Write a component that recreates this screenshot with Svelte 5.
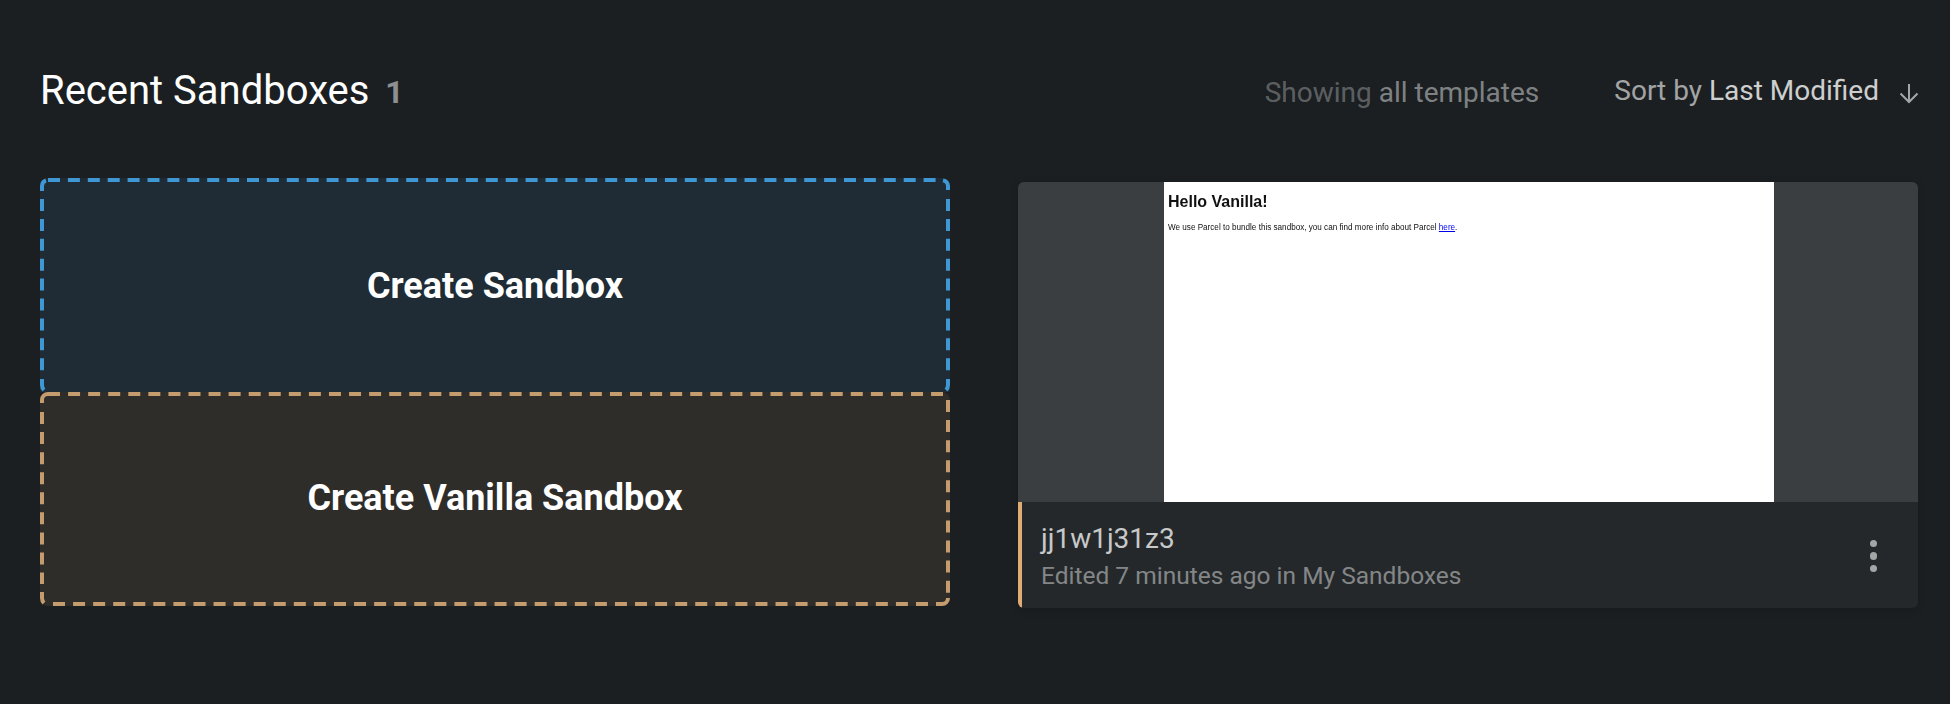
<script lang="ts">
  // dash phases differ per box, so each side of the border is its own path
  const creators = [
    {
      label: 'Create Sandbox',
      tone: 'blue',
      gap: 7.9,
      dashed: ['M8 2H896', 'M908 21V193', 'M2 21V193'],
      solid: [
        'M2 13V8A6 6 0 0 1 6 2.4',
        'M903 2.4A6 6 0 0 1 908 8V12',
        'M908 201V207Q908 210 906 212',
        'M2 201V207Q2 210 4 212'
      ]
    },
    {
      label: 'Create Vanilla Sandbox',
      tone: 'tan',
      gap: 8.07,
      dashed: ['M8 2H903', 'M908 8V201', 'M2 20V192', 'M13 212H888'],
      solid: [
        'M2 11V8A6 6 0 0 1 8 2',
        'M896 212H902A6 6 0 0 0 908 206',
        'M2 200V206Q2 209 4 211'
      ]
    }
  ]
</script>

<main class="page">
  <header class="head">
    <h1 class="title">Recent Sandboxes <span class="count">1</span></h1>
    <div class="filters">
      <span class="showing">Showing <b>all templates</b></span>
      <button class="sort" type="button">
        <span>Sort by <b>Last Modified</b></span>
        <svg width="22" height="22" viewBox="0 0 22 22" fill="none" stroke="currentColor" stroke-width="2">
          <path d="M11 2v18M2.5 11.5l8.5 8.5 8.5-8.5" />
        </svg>
      </button>
    </div>
  </header>

  <section class="grid">
    <div class="creators">
      {#each creators as creator (creator.label)}
        <button class={`create ${creator.tone}`} type="button">
          <svg class="edge" width="910" height="214" viewBox="0 0 910 214" fill="none" stroke-width="4">
            {#each creator.dashed as d}
              <path {d} stroke-dasharray={`12 ${creator.gap}`} />
            {/each}
            {#each creator.solid as d}
              <path {d} />
            {/each}
          </svg>
          <span class="label">{creator.label}</span>
        </button>
      {/each}
    </div>

    <article class="card">
      <div class="thumb">
        <div class="preview">
          <h2>Hello Vanilla!</h2>
          <p>We use Parcel to bundle this sandbox, you can find more info about Parcel <a href="#here">here</a>.</p>
        </div>
      </div>
      <footer class="info">
        <div>
          <div class="name">jj1w1j31z3</div>
          <div class="meta">Edited 7 minutes ago in My Sandboxes</div>
        </div>
        <button class="more" type="button" aria-label="More">
          <i></i><i></i><i></i>
        </button>
      </footer>
    </article>
  </section>
</main>

<style>
  :global(body) {
    background: #1b1f22;
    font-family: Roboto, sans-serif;
  }

  .page {
    height: 704px;
    box-sizing: border-box;
    padding: 0 30px 0 40px;
    overflow: hidden;
  }

  .head {
    display: flex;
    align-items: center;
    justify-content: space-between;
    height: 178px;
    padding-top: 5px;
    box-sizing: border-box;
  }

  .title {
    margin: 0;
    font-size: 40px;
    font-weight: 400;
    color: #fff;
    line-height: 46px;
  }

  .count {
    position: relative;
    top: -1px;
    margin-left: 6px;
    font-size: 32px;
    font-weight: 700;
    color: rgba(255, 255, 255, 0.5);
  }

  .filters {
    display: flex;
    align-items: center;
    gap: 75px;
    font-size: 28px;
    font-weight: 400;
    margin-top: -3px;
  }

  .showing {
    margin-top: 5px;
    color: rgba(255, 255, 255, 0.3);
  }

  .showing b {
    font-weight: 400;
    color: rgba(255, 255, 255, 0.45);
  }

  .sort {
    display: flex;
    align-items: center;
    gap: 19px;
    padding: 0;
    border: 0;
    background: none;
    font: inherit;
    color: rgba(255, 255, 255, 0.6);
  }

  .sort b {
    font-weight: 400;
    color: rgba(255, 255, 255, 0.8);
  }

  .sort svg {
    margin-top: 6px;
    color: rgba(255, 255, 255, 0.6);
  }

  .grid {
    display: flex;
    gap: 68px;
    align-items: flex-start;
  }

  .creators {
    display: flex;
    flex-direction: column;
    width: 910px;
  }

  .create {
    position: relative;
    height: 214px;
    box-sizing: border-box;
    padding: 0;
    border: 0;
    font-family: Roboto, sans-serif;
    font-size: 36px;
    font-weight: 700;
    color: #fff;
  }

  .blue .label {
    position: relative;
    top: 1px;
  }

  .tan .label {
    position: relative;
    top: -1px;
  }

  .edge {
    position: absolute;
    top: 0;
    left: 0;
  }

  .blue {
    background: #1f2c35;
    border-radius: 8px 8px 0 0;
  }

  .blue .edge {
    stroke: #3f97d3;
  }

  .tan {
    background: #2f2d2a;
    border-radius: 8px;
  }

  .tan .edge {
    stroke: #c49c6e;
  }

  .card {
    width: 900px;
    height: 426px;
    margin-top: 4px;
    border-radius: 6px;
    overflow: hidden;
    background: #24282a;
    box-shadow: 0 2px 8px rgba(0, 0, 0, 0.15);
  }

  .thumb {
    height: 320px;
    padding-left: 146px;
    background: #3a3e41;
  }

  .preview {
    width: 610px;
    height: 320px;
    box-sizing: border-box;
    padding: 10.5px 4px;
    background: #fff;
    color: #111;
    font-family: 'Liberation Sans', sans-serif;
  }

  .preview h2,
  .preview p {
    filter: blur(0.3px);
  }

  .preview h2 {
    margin: 0;
    font-size: 16px;
    line-height: 18px;
  }

  .preview p {
    margin: 12px 0 0;
    font-size: 8.14px;
    line-height: 10px;
  }

  .preview a {
    color: #0000ee;
  }

  .info {
    display: flex;
    align-items: center;
    justify-content: space-between;
    height: 106px;
    box-sizing: border-box;
    padding: 0 41px 0 19px;
    border-left: 4px solid #dfac75;
  }

  .name {
    margin-top: 2px;
    font-size: 28px;
    font-weight: 400;
    line-height: 32px;
    color: rgba(255, 255, 255, 0.75);
  }

  .meta {
    margin-top: 7px;
    font-size: 24.5px;
    line-height: 27px;
    color: rgba(255, 255, 255, 0.45);
  }

  .more {
    display: flex;
    flex-direction: column;
    gap: 5px;
    margin-top: 2px;
    padding: 0;
    border: 0;
    background: none;
  }

  .more i {
    width: 7.5px;
    height: 7.5px;
    border-radius: 50%;
    background: #a3a5a6;
  }
</style>
